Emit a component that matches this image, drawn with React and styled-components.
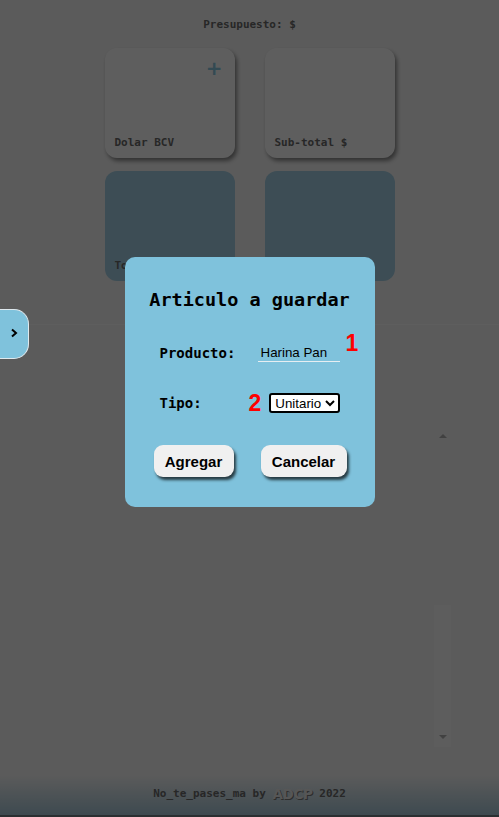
import React from "react";
import styled, { createGlobalStyle } from "styled-components";

const Global = createGlobalStyle`
  html, body { margin: 0; padding: 0; }
  body { background: #e4e4e4; font-family: "DejaVu Sans Mono", "Liberation Mono", monospace; }
  * { box-sizing: border-box; }
`;

const Page = styled.div`
  position: relative;
  min-height: 817px;
  height: 817px;
  display: flex;
  flex-direction: column;
  align-items: center;
  background: #e4e4e4;
  overflow: hidden;
`;

const Budget = styled.div`
  margin-top: 18px;
  font-size: 11px;
  font-weight: bold;
  color: #626262;
  height: 14px;
  line-height: 14px;
`;

const CardGrid = styled.div`
  margin-top: 16px;
  display: grid;
  grid-template-columns: 130px 130px;
  grid-auto-rows: 110px;
  column-gap: 30px;
  row-gap: 13px;
`;

const Card = styled.div`
  position: relative;
  border-radius: 12px;
  background: ${(p) => (p.$accent ? "#98c0d4" : "#ececec")};
  box-shadow: ${(p) => (p.$accent ? "none" : "2px 3px 4px rgba(0,0,0,0.45)")};
  display: flex;
  align-items: flex-end;
  padding: 0 10px 9px;
  font-size: 11px;
  font-weight: bold;
  color: #626262;
`;

const Plus = styled.span`
  position: absolute;
  top: 10px;
  right: 12px;
  font-size: 20px;
  line-height: 20px;
  color: #7fb8cf;
  font-family: "DejaVu Sans", sans-serif;
`;

const Section = styled.div`
  align-self: stretch;
  margin-top: 43px;
  border-top: 1px solid #eaeaea;
  flex: 1;
  display: flex;
  justify-content: flex-end;
  padding: 106px 48px 28px 0;
`;

const Scroll = styled.div`
  width: 17px;
  display: flex;
  flex-direction: column;
  justify-content: space-between;
  align-items: center;
  padding: 3px 0 8px;
  background: linear-gradient(to bottom, transparent 0 55%, #e9e9e9 55% 100%);
`;

const Arrow = styled.div`
  width: 0;
  height: 0;
  border-left: 4px solid transparent;
  border-right: 4px solid transparent;
  ${(p) => (p.$down ? "border-top: 4px solid #a3a3a3;" : "border-bottom: 4px solid #a3a3a3;")}
`;

const Footer = styled.footer`
  align-self: stretch;
  height: 42px;
  background: linear-gradient(to bottom, #e4e4e4, #9bb9c8);
  border-bottom: 2px solid #6a767c;
  display: flex;
  justify-content: center;
  align-items: center;
  padding-bottom: 3px;
  font-size: 11px;
  font-weight: bold;
  color: #626262;
  white-space: pre;
`;

const Brand = styled.span`
  font-family: "DejaVu Sans", sans-serif;
  font-size: 13.5px;
  font-weight: bold;
  color: #d8d8d8;
  text-shadow: 1px 1px 0 #707070;
  letter-spacing: -0.3px;
`;

const Overlay = styled.div`
  position: absolute;
  inset: 0;
  background: rgba(0, 0, 0, 0.6);
  display: flex;
  justify-content: center;
  align-items: flex-start;
  padding-top: 257px;
`;

const Toggle = styled.button`
  position: absolute;
  left: -1px;
  top: 309px;
  width: 30px;
  height: 50px;
  border: 1px solid #dfe9ee;
  border-left: none;
  border-radius: 0 15px 15px 0;
  background: #7fc2dc;
  display: flex;
  align-items: center;
  justify-content: center;
  padding: 0 0 2px 0;
  cursor: pointer;
`;

const Modal = styled.div`
  width: 250px;
  height: 250px;
  border-radius: 10px;
  background: #7fc2dc;
  display: flex;
  flex-direction: column;
  align-items: center;
  padding-top: 32px;
`;

const Title = styled.h2`
  margin: 0;
  font-size: 18.5px;
  font-weight: bold;
  color: #000;
  line-height: 22px;
`;

const Row = styled.div`
  align-self: stretch;
  display: flex;
  align-items: center;
  padding-left: 35px;
  margin-top: ${(p) => p.$mt}px;
  height: 24px;
`;

const Label = styled.label`
  font-size: 14px;
  font-weight: bold;
  color: #000;
  width: ${(p) => p.$w}px;
`;

const TextInput = styled.input`
  width: 82px;
  border: none;
  border-bottom: 1px solid #e6eef2;
  background: transparent;
  font-family: "Liberation Sans", Arial, sans-serif;
  font-size: 13.33px;
  color: #000;
  padding: 0 0 1px 3px;
  outline: none;
`;

const Badge = styled.span`
  font-family: "Liberation Sans", Arial, sans-serif;
  font-weight: bold;
  font-size: 23px;
  color: #ff0000;
  line-height: 1;
`;

const Select = styled.select`
  margin-left: 8px;
  width: 71px;
  height: 20px;
  border: 2px solid #000;
  border-radius: 3px;
  background: #fff;
  font-family: "Liberation Sans", Arial, sans-serif;
  font-size: 13.33px;
  color: #000;
  padding: 0;
`;

const Buttons = styled.div`
  margin-top: 30px;
  display: flex;
  gap: 27px;
  margin-left: 1px;
`;

const Btn = styled.button`
  width: ${(p) => p.$w}px;
  height: 32px;
  border: none;
  border-radius: 9px;
  background: #f0f0f0;
  box-shadow: 2px 3px 3px rgba(0, 0, 0, 0.7);
  font-family: "Liberation Sans", Arial, sans-serif;
  font-weight: bold;
  font-size: 15px;
  color: #000;
  cursor: pointer;
`;

export default function App() {
  return (
    <>
      <Global />
      <Page>
        <Budget>Presupuesto: $</Budget>
        <CardGrid>
          <Card>
            <Plus>+</Plus>
            Dolar BCV
          </Card>
          <Card>Sub-total $</Card>
          <Card $accent>Total</Card>
          <Card $accent></Card>
        </CardGrid>
        <Section>
          <Scroll>
            <Arrow />
            <Arrow $down />
          </Scroll>
        </Section>
        <Footer>
          No_te_pases_ma by <Brand>ADCP</Brand> 2022
        </Footer>
        <Overlay>
          <Modal>
            <Title>Articulo a guardar</Title>
            <Row $mt={30}>
              <Label $w={98}>Producto:</Label>
              <TextInput defaultValue="Harina Pan" />
              <Badge style={{ marginLeft: 6, marginTop: -20 }}>1</Badge>
            </Row>
            <Row $mt={26}>
              <Label $w={89}>Tipo:</Label>
              <Badge>2</Badge>
              <Select defaultValue="Unitario">
                <option>Unitario</option>
                <option>Kilo</option>
              </Select>
            </Row>
            <Buttons>
              <Btn $w={80}>Agregar</Btn>
              <Btn $w={86}>Cancelar</Btn>
            </Buttons>
          </Modal>
        </Overlay>
        <Toggle aria-label="abrir">
          <svg width="8" height="10" viewBox="0 0 8 10">
            <path d="M2 1.5 L6 5 L2 8.5" fill="none" stroke="#000" strokeWidth="2" />
          </svg>
        </Toggle>
      </Page>
    </>
  );
}
